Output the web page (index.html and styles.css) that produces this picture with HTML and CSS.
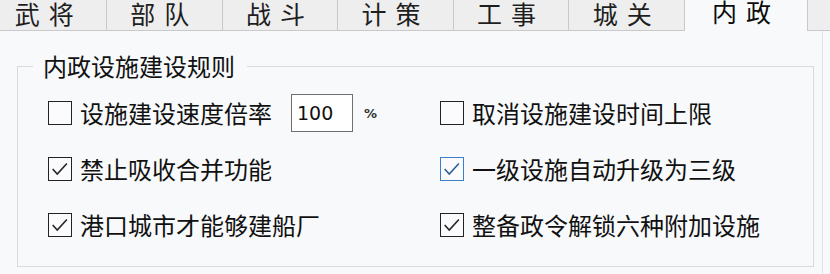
FILE: index.html
```html
<!DOCTYPE html>
<html lang="zh-CN">
<head>
<meta charset="utf-8">
<title>内政设施建设规则</title>
<link rel="stylesheet" href="styles.css">
</head>
<body>
<div class="window">
  <div class="tabs">
    <div class="tab">武将</div>
    <div class="tab">部队</div>
    <div class="tab">战斗</div>
    <div class="tab">计策</div>
    <div class="tab">工事</div>
    <div class="tab">城关</div>
    <div class="tab active">内政</div>
    <div class="tab">其他</div>
  </div>
  <div class="page">
    <fieldset class="group">
      <legend class="legend">内政设施建设规则</legend>
      <div class="grid">
        <div class="row">
          <span class="box"></span>
          <span class="label">设施建设速度倍率</span>
          <span class="input">100</span>
          <span class="pct">%</span>
        </div>
        <div class="row">
          <span class="box"></span>
          <span class="label">取消设施建设时间上限</span>
        </div>
        <div class="row">
          <span class="box"><svg viewBox="0 0 24 24" class="tick"><polyline points="4,12 9,17.5 19.5,6"/></svg></span>
          <span class="label">禁止吸收合并功能</span>
        </div>
        <div class="row">
          <span class="box focus"><svg viewBox="0 0 24 24" class="tick"><polyline points="4,12 9,17.5 19.5,6"/></svg></span>
          <span class="label">一级设施自动升级为三级</span>
        </div>
        <div class="row">
          <span class="box"><svg viewBox="0 0 24 24" class="tick"><polyline points="4,12 9,17.5 19.5,6"/></svg></span>
          <span class="label">港口城市才能够建船厂</span>
        </div>
        <div class="row">
          <span class="box"><svg viewBox="0 0 24 24" class="tick"><polyline points="4,12 9,17.5 19.5,6"/></svg></span>
          <span class="label">整备政令解锁六种附加设施</span>
        </div>
      </div>
    </fieldset>
  </div>
</div>
</body>
</html>
```
FILE: styles.css
```css
html, body {
  margin: 0;
  padding: 0;
  background: #f8f9fb;
  overflow: hidden;
}
body {
  width: 830px;
  height: 274px;
  font-family: "Noto Sans CJK SC", "Noto Sans", sans-serif;
  color: #111;
}
.window {
  width: 830px;
  height: 274px;
  overflow: hidden;
}
.tabs {
  display: flex;
  margin-left: -8.6px;
  height: 31px;
  width: 900px;
}
.tab {
  flex: 0 0 115.6px;
  box-sizing: border-box;
  height: 31px;
  background: #eeeeef;
  border-right: 1px solid #c9c9cb;
  border-bottom: 1px solid #c9c9cb;
  font-size: 25px;
  line-height: 27px;
  letter-spacing: 9px;
  text-align: center;
  padding-top: 0;
  color: #1e1e1e;
}
.tab.active {
  flex: 0 0 123px;
  background: #f8f9fb;
  border-bottom: none;
  line-height: 22px;
  color: #0c0c0c;
}
.page {
  width: 823px;
  height: 243px;
  box-sizing: border-box;
  border-right: 1px solid #e3e4e7;
  padding-top: 22px;
}
.group {
  margin: 0 0 0 17px;
  padding: 0 0 22px 0;
  width: 797px;
  box-sizing: border-box;
  border: 1px solid #d9dadd;
  min-inline-size: 0;
}
.legend {
  margin-left: 15px;
  padding: 0 12px 0 10px;
  font-size: 24px;
  line-height: 26px;
}
.grid {
  display: grid;
  grid-template-columns: 392px 1fr;
  grid-auto-rows: 38px;
  row-gap: 18px;
  padding: 15px 0 0 30px;
}
.row {
  display: flex;
  align-items: center;
}
.box {
  width: 24px;
  height: 24px;
  box-sizing: border-box;
  border: 1.6px solid #222;
  background: #fbfbfd;
  flex: 0 0 auto;
  display: flex;
}
.box.focus {
  border-color: #3a80c8;
}
.tick {
  width: 100%;
  height: 100%;
}
.tick polyline {
  fill: none;
  stroke: #222;
  stroke-width: 1.7;
}
.box.focus .tick polyline {
  stroke: #2c5f96;
}
.label {
  margin-left: 8px;
  font-size: 24px;
  line-height: 28px;
  white-space: nowrap;
}
.input {
  margin-left: 19px;
  width: 62px;
  height: 38px;
  box-sizing: border-box;
  border: 1px solid #6f6f6f;
  background: #ffffff;
  font-family: "DejaVu Sans", sans-serif;
  font-size: 19px;
  line-height: 36px;
  padding-left: 5px;
  color: #111;
}
.pct {
  margin-left: 11px;
  font-family: "DejaVu Sans", sans-serif;
  font-size: 13px;
  font-weight: bold;
  color: #333;
}
```
